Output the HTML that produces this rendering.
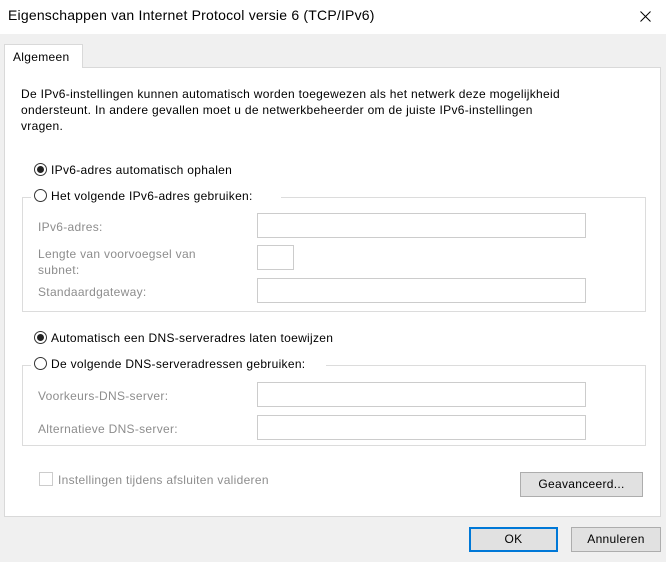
<!DOCTYPE html>
<html><head><style>
*{box-sizing:border-box;margin:0;padding:0}
body{width:666px;height:562px;background:#f0f0f0;font-family:"Liberation Sans",sans-serif;font-size:12px;letter-spacing:0.3px;color:#000;position:relative;overflow:hidden}
.a{position:absolute;white-space:nowrap}
.title{left:0;top:0;width:666px;height:34px;background:#fff}
.panel{left:4px;top:67px;width:657px;height:450px;background:#fff;border:1px solid #d9d9d9}
.tab{left:4px;top:44px;width:79px;height:24px;background:#fff;border:1px solid #d9d9d9;border-bottom:none}
.grp{border:1px solid #dcdcdc}
.field{background:#fff;border:1px solid #cccccc}
.dis{color:#8d8d8d}
.radio{width:13px;height:13px;border:1px solid #333;border-radius:50%;background:#fff}
.radio.on::after{content:"";position:absolute;left:2px;top:2px;width:7px;height:7px;border-radius:50%;background:#222}
.btn{background:#e1e1e1;border:1px solid #adadad;text-align:center;line-height:22px}
</style></head><body>
<div class="a title"></div>
<div class="a" style="left:8px;top:7px;font-size:14px;letter-spacing:0.2px">Eigenschappen van Internet Protocol versie 6 (TCP/IPv6)</div>
<svg class="a" style="left:640px;top:11px" width="11" height="11"><path d="M0.5 0.5L10.5 10.5M10.5 0.5L0.5 10.5" stroke="#000" stroke-width="1"/></svg>
<div class="a panel"></div>
<div class="a tab"></div>
<div class="a" style="left:13px;top:50px">Algemeen</div>
<div class="a" style="left:21px;top:86px;line-height:16px">De IPv6-instellingen kunnen automatisch worden toegewezen als het netwerk deze mogelijkheid<br>ondersteunt. In andere gevallen moet u de netwerkbeheerder om de juiste IPv6-instellingen<br>vragen.</div>

<div class="a radio on" style="left:34px;top:163px"></div>
<div class="a" style="left:51px;top:163px">IPv6-adres automatisch ophalen</div>
<div class="a grp" style="left:22px;top:197px;width:624px;height:115px"></div>
<div class="a" style="left:31px;top:188px;width:250px;height:16px;background:#fff"></div>
<div class="a radio" style="left:34px;top:189px"></div>
<div class="a" style="left:51px;top:189px">Het volgende IPv6-adres gebruiken:</div>
<div class="a dis" style="left:38px;top:220px">IPv6-adres:</div>
<div class="a field" style="left:257px;top:213px;width:329px;height:25px"></div>
<div class="a dis" style="left:38px;top:246px;line-height:16px">Lengte van voorvoegsel van<br>subnet:</div>
<div class="a field" style="left:257px;top:245px;width:37px;height:25px"></div>
<div class="a dis" style="left:38px;top:285px">Standaardgateway:</div>
<div class="a field" style="left:257px;top:278px;width:329px;height:25px"></div>

<div class="a radio on" style="left:34px;top:331px"></div>
<div class="a" style="left:51px;top:331px">Automatisch een DNS-serveradres laten toewijzen</div>
<div class="a grp" style="left:22px;top:365px;width:624px;height:81px"></div>
<div class="a" style="left:31px;top:356px;width:295px;height:16px;background:#fff"></div>
<div class="a radio" style="left:34px;top:357px"></div>
<div class="a" style="left:51px;top:357px">De volgende DNS-serveradressen gebruiken:</div>
<div class="a dis" style="left:38px;top:389px">Voorkeurs-DNS-server:</div>
<div class="a field" style="left:257px;top:382px;width:329px;height:25px"></div>
<div class="a dis" style="left:38px;top:422px">Alternatieve DNS-server:</div>
<div class="a field" style="left:257px;top:415px;width:329px;height:25px"></div>

<div class="a" style="left:39px;top:472px;width:14px;height:14px;border:1px solid #ccc;background:#fff"></div>
<div class="a dis" style="left:58px;top:473px">Instellingen tijdens afsluiten valideren</div>
<div class="a btn" style="left:520px;top:472px;width:123px;height:25px">Geavanceerd...</div>
<div class="a btn" style="left:469px;top:527px;width:89px;height:25px;border:2px solid #0078d7;line-height:21px">OK</div>
<div class="a btn" style="left:571px;top:527px;width:90px;height:25px">Annuleren</div>
</body></html>
